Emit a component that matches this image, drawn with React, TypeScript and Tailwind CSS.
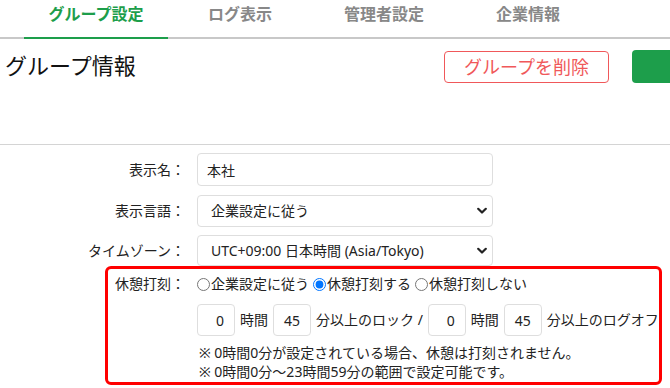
import { useState } from "react";

const tabs = ["グループ設定", "ログ表示", "管理者設定", "企業情報"];

function Chevron() {
  return (
    <svg
      className="pointer-events-none absolute right-[6px] top-1/2 -translate-y-1/2"
      width="10"
      height="7"
      viewBox="0 0 10 7"
    >
      <path d="M1.2 1.2 L5 5 L8.8 1.2" fill="none" stroke="#222" strokeWidth="2.2" strokeLinecap="round" strokeLinejoin="round" />
    </svg>
  );
}

function Select({ value, options, h }: { value: string; options: string[]; h: string }) {
  return (
    <div className="relative w-[296px]">
      <select
        defaultValue={value}
        className={`${h} w-full appearance-none rounded border border-[#dedede] bg-white pl-[13px] pr-6 text-sm text-[#222] outline-none`}
      >
        {options.map((o) => (
          <option key={o}>{o}</option>
        ))}
      </select>
      <Chevron />
    </div>
  );
}

function NumBox({ value }: { value: string }) {
  return (
    <input
      type="text"
      defaultValue={value}
      className="h-[32px] w-[38px] rounded border border-[#dedede] pr-[10px] text-right text-sm text-[#222] outline-none"
    />
  );
}

export default function App() {
  const [active, setActive] = useState(0);
  const [breakMode, setBreakMode] = useState("on");

  return (
    <div className="h-[388px] w-[670px] overflow-hidden bg-white font-['Noto_Sans','Noto_Sans_CJK_JP',sans-serif] text-[#222]">
      {/* Tabs */}
      <nav className="flex h-[39px] border-b-2 border-[#c8c8c8] pl-6">
        {tabs.map((t, i) => (
          <button
            key={t}
            onClick={() => setActive(i)}
            className={`-mb-[2px] h-[39px] w-[144px] border-b-2 pb-[9px] text-center text-base leading-5 font-bold ${
              active === i ? "border-[#1d9e4b] text-[#1d9e4b]" : "border-transparent text-[#888]"
            }`}
          >
            {t}
          </button>
        ))}
      </nav>

      {/* Heading row */}
      <div className="mt-[11px] flex w-[712px] items-center">
        <h1 className="-mt-[3px] flex-1 pl-[5px] text-[22px] leading-8 font-normal text-[#111]">グループ情報</h1>
        <button className="h-[32px] w-[165px] rounded border border-[#f0585a] text-lg leading-none text-[#f0585a]">
          グループを削除
        </button>
        <button className="ml-[23px] h-[33px] w-[80px] rounded bg-[#1d9e4b]"></button>
      </div>

      <div className="mt-[61px] border-t border-[#d4d4d4]" />

      {/* Form */}
      <div className="mt-2 flex flex-col text-sm">
        <div className="flex items-center">
          <label className="w-[185px] text-right">表示名：</label>
          <input
            type="text"
            defaultValue="本社"
            className="ml-3 h-[33px] w-[296px] rounded border border-[#dedede] pl-[9px] text-sm text-[#222] outline-none"
          />
        </div>
        <div className="mt-[9px] flex items-center">
          <label className="w-[185px] text-right">表示言語：</label>
          <div className="ml-3">
            <Select h="h-[32px]" value="企業設定に従う" options={["企業設定に従う", "日本語", "English"]} />
          </div>
        </div>
        <div className="mt-2 flex items-center">
          <label className="w-[185px] text-right">タイムゾーン：</label>
          <div className="ml-3">
            <Select h="h-[31px]" value="UTC+09:00 日本時間 (Asia/Tokyo)" options={["UTC+09:00 日本時間 (Asia/Tokyo)"]} />
          </div>
        </div>

        {/* Break stamping */}
        <div className="ml-[105px] w-[557px] rounded-md border-[3px] border-[#ff0000] pt-[5px] pb-px">
          <div className="flex items-center leading-5">
            <span className="w-[77px] text-right">休憩打刻：</span>
            <div className="ml-3 flex items-center whitespace-nowrap">
              {[
                ["follow", "企業設定に従う"],
                ["on", "休憩打刻する"],
                ["off", "休憩打刻しない"],
              ].map(([v, l]) => (
                <label key={v} className="mr-1 flex items-center">
                  <input
                    type="radio"
                    name="break"
                    checked={breakMode === v}
                    onChange={() => setBreakMode(v)}
                    className="m-0 mr-px h-[13px] w-[13px]"
                  />
                  {l}
                </label>
              ))}
            </div>
          </div>
          <div className="mt-[10px] ml-[89px] flex items-center gap-[5px] whitespace-nowrap">
            <NumBox value="0" />
            <span>時間</span>
            <NumBox value="45" />
            <span>分以上のロック /</span>
            <NumBox value="0" />
            <span>時間</span>
            <NumBox value="45" />
            <span>分以上のログオフ</span>
          </div>
          <div className="mt-[7px] ml-[91px] leading-[19px] text-[#222]">
            <p>※ 0時間0分が設定されている場合、休憩は打刻されません。</p>
            <p>※ 0時間0分～23時間59分の範囲で設定可能です。</p>
          </div>
        </div>
      </div>
    </div>
  );
}
